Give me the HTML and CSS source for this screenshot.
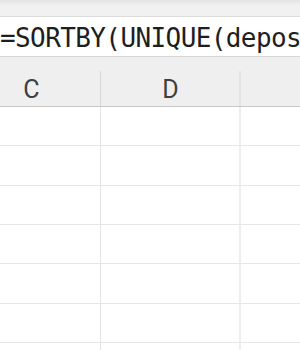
FILE: index.html
```html
<!DOCTYPE html>
<html>
<head>
<meta charset="utf-8">
<link rel="stylesheet" href="styles.css">
</head>
<body>
<div class="sheet">
  <div class="topband"></div>
  <div class="formula">=SORTBY(UNIQUE(deposits</div>
  <div class="header">
    <div class="hcell">C</div>
    <div class="hcell">D</div>
    <div class="hcell last"></div>
  </div>
  <div class="grid">
    <div class="cell"></div><div class="cell"></div><div class="cell last"></div>
    <div class="cell"></div><div class="cell"></div><div class="cell last"></div>
    <div class="cell"></div><div class="cell"></div><div class="cell last"></div>
    <div class="cell"></div><div class="cell"></div><div class="cell last"></div>
    <div class="cell"></div><div class="cell"></div><div class="cell last"></div>
    <div class="cell"></div><div class="cell"></div><div class="cell last"></div>
    <div class="cell"></div><div class="cell"></div><div class="cell last"></div>
  </div>
</div>
</body>
</html>
```

FILE: styles.css
```css
html, body {
  margin: 0;
  padding: 0;
  background: #ffffff;
  overflow: hidden;
}
.sheet {
  width: 300px;
  height: 350px;
  overflow: hidden;
}
.topband {
  height: 16px;
  background: linear-gradient(#e4e4e4 0px, #ececec 4px, #f1f1f1 6px, #f1f1f1 100%);
  border-bottom: 1px solid #dcdcdc;
}
.formula {
  height: 39px;
  border-bottom: 1px solid #d6d6d6;
  font-family: "DejaVu Sans Mono", monospace;
  font-size: 26px;
  letter-spacing: -0.6px;
  line-height: 43px;
  color: #1e1e1e;
  white-space: nowrap;
  overflow: hidden;
}
.header {
  display: grid;
  grid-template-columns: 139px 139px 1fr;
  margin-left: -38px;
  height: 49px;
  background: #efefef;
  border-bottom: 1px solid #c6c6c6;
  overflow: hidden;
}
.hcell {
  position: relative;
  font-family: Roboto, "Noto Sans", sans-serif;
  font-size: 25px;
  color: #3f3f3f;
  text-align: center;
  line-height: 49px;
  padding-top: 8px;
}
.hcell::after {
  content: "";
  position: absolute;
  right: 0;
  top: 14px;
  bottom: 0;
  width: 1px;
  background: #d8d8d8;
}
.hcell:nth-child(2)::after {
  width: 2px;
  right: -1px;
  background: #e4e4e4;
}
.hcell.last::after {
  display: none;
}
.grid {
  display: grid;
  grid-template-columns: 139px 139px 1fr;
  grid-auto-rows: 39.33px;
  margin-left: -38px;
}
.cell {
  border-right: 1px solid #e3e3e3;
  border-bottom: 1px solid #e6e6e6;
}
.cell:nth-child(3n+2) {
  border-right: 2px solid #eeeeee;
  margin-right: -1px;
}
.cell.last {
  border-right: none;
}
```
